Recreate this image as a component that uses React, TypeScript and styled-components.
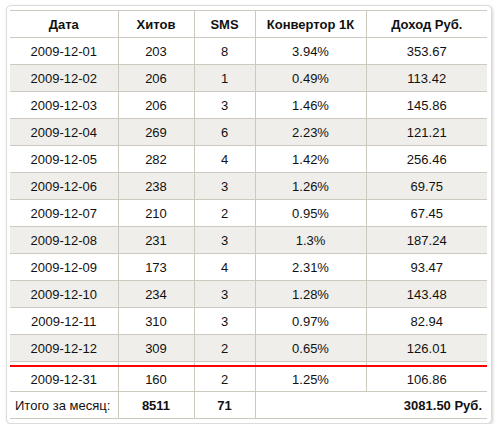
import React from "react";
import styled, { createGlobalStyle } from "styled-components";

const rows = [
  { date: "2009-12-01", hits: 203, sms: 8, conv: "3.94%", income: "353.67" },
  { date: "2009-12-02", hits: 206, sms: 1, conv: "0.49%", income: "113.42" },
  { date: "2009-12-03", hits: 206, sms: 3, conv: "1.46%", income: "145.86" },
  { date: "2009-12-04", hits: 269, sms: 6, conv: "2.23%", income: "121.21" },
  { date: "2009-12-05", hits: 282, sms: 4, conv: "1.42%", income: "256.46" },
  { date: "2009-12-06", hits: 238, sms: 3, conv: "1.26%", income: "69.75" },
  { date: "2009-12-07", hits: 210, sms: 2, conv: "0.95%", income: "67.45" },
  { date: "2009-12-08", hits: 231, sms: 3, conv: "1.3%", income: "187.24" },
  { date: "2009-12-09", hits: 173, sms: 4, conv: "2.31%", income: "93.47" },
  { date: "2009-12-10", hits: 234, sms: 3, conv: "1.28%", income: "143.48" },
  { date: "2009-12-11", hits: 310, sms: 3, conv: "0.97%", income: "82.94" },
  { date: "2009-12-12", hits: 309, sms: 2, conv: "0.65%", income: "126.01" },
];

const last = { date: "2009-12-31", hits: 160, sms: 2, conv: "1.25%", income: "106.86" };

const GlobalStyle = createGlobalStyle`
  body {
    margin: 0;
    background: #fff;
    font-family: "Liberation Sans", Arial, sans-serif;
  }
`;

const Box = styled.div`
  box-sizing: border-box;
  width: 486px;
  height: 419px;
  margin: 5px 0 0 6px;
  padding: 4px 4px 0 3px;
  border: 1px solid #dcdcdc;
  border-radius: 5px;
  box-shadow: 1px 1px 3px rgba(0, 0, 0, 0.18);
  background: #fff;
`;

const Table = styled.table`
  width: 477px;
  table-layout: fixed;
  border-collapse: collapse;
  font-size: 13px;
  color: #111;
`;

const Row = styled.tr<{ $shaded?: boolean }>`
  background: ${({ $shaded }) => ($shaded ? "#efeeea" : "#fff")};
`;

const Cell = styled.td<{ $align?: string; $bold?: boolean; $h?: number }>`
  height: ${({ $h }) => $h ?? 26}px;
  padding: 0 5px;
  text-align: ${({ $align }) => $align ?? "center"};
  font-weight: ${({ $bold }) => ($bold ? "bold" : "normal")};
  border: 1px solid #cdc9bf;
  white-space: nowrap;
  &:first-child {
    border-left: none;
  }
  &:last-child {
    border-right: none;
  }
`;

const HeadCell = styled(Cell).attrs({ as: "th" })`
  font-weight: bold;
`;

const Divider = styled.td`
  height: 3px;
  padding: 0;
  border-left: 1px solid #cdc9bf;
  border-bottom: 2px solid #f00;
  &:first-child {
    border-left: none;
  }
`;

const DataRow: React.FC<{ r: typeof last; shaded?: boolean; h?: number }> = ({ r, shaded, h }) => (
  <Row $shaded={shaded}>
    <Cell $h={h}>{r.date}</Cell>
    <Cell $h={h}>{r.hits}</Cell>
    <Cell $h={h}>{r.sms}</Cell>
    <Cell $h={h}>{r.conv}</Cell>
    <Cell $h={h}>{r.income}</Cell>
  </Row>
);

const App: React.FC = () => (
  <>
    <GlobalStyle />
    <Box>
      <Table>
        <colgroup>
          <col style={{ width: 108 }} />
          <col style={{ width: 76 }} />
          <col style={{ width: 61 }} />
          <col style={{ width: 111 }} />
          <col style={{ width: 121 }} />
        </colgroup>
        <thead>
          <Row>
            <HeadCell>Дата</HeadCell>
            <HeadCell>Хитов</HeadCell>
            <HeadCell>SMS</HeadCell>
            <HeadCell>Конвертор 1К</HeadCell>
            <HeadCell>Доход Руб.</HeadCell>
          </Row>
        </thead>
        <tbody>
          {rows.map((r, i) => (
            <DataRow key={r.date} r={r} shaded={i % 2 === 1} />
          ))}
          <tr>
            <Divider />
            <Divider />
            <Divider />
            <Divider />
            <Divider />
          </tr>
          <DataRow r={last} h={24} />
          <Row>
            <Cell $align="left">Итого за месяц:</Cell>
            <Cell $bold>8511</Cell>
            <Cell $bold>71</Cell>
            <Cell $bold $align="right" colSpan={2}>
              3081.50 Руб.
            </Cell>
          </Row>
        </tbody>
      </Table>
    </Box>
  </>
);

export default App;
